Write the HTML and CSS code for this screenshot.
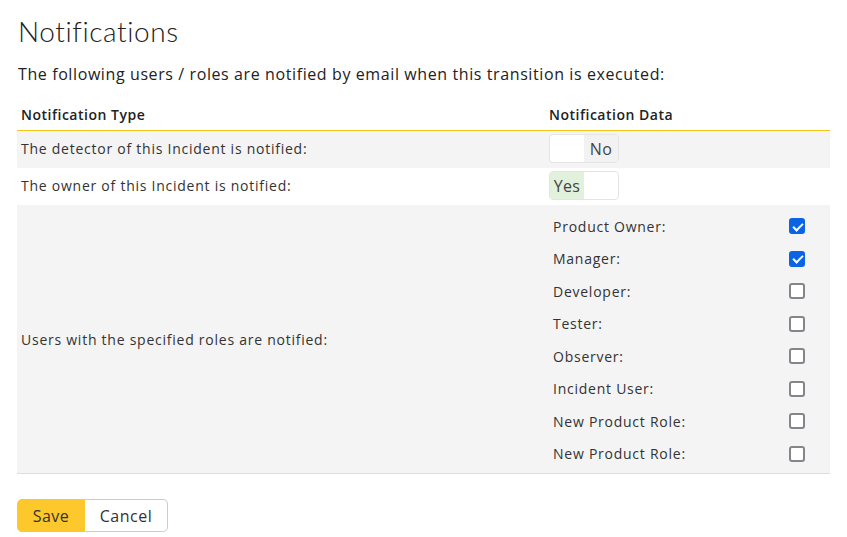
FILE: index.html
```html
<!DOCTYPE html>
<html lang="en">
<head>
    <meta charset="UTF-8">
    <title>Notifications</title>
    <link rel="stylesheet" href="styles.css">
</head>
<body>
    <div class="page">
        <h2 class="title">Notifications</h2>
        <p class="intro">The following users / roles are notified by email when this transition is executed:</p>

        <table class="notify-table">
            <thead>
                <tr>
                    <th class="col-type">Notification Type</th>
                    <th>Notification Data</th>
                </tr>
            </thead>
            <tbody>
                <tr class="shaded">
                    <td>The detector of this Incident is notified:</td>
                    <td>
                        <div class="toggle">
                            <span class="toggle-half"></span>
                            <span class="toggle-half off">No</span>
                        </div>
                    </td>
                </tr>
                <tr>
                    <td>The owner of this Incident is notified:</td>
                    <td>
                        <div class="toggle">
                            <span class="toggle-half on">Yes</span>
                            <span class="toggle-half"></span>
                        </div>
                    </td>
                </tr>
                <tr class="shaded last">
                    <td>Users with the specified roles are notified:</td>
                    <td>
                        <ul class="roles">
                            <li><span>Product Owner:</span><span class="check checked"></span></li>
                            <li><span>Manager:</span><span class="check checked"></span></li>
                            <li><span>Developer:</span><span class="check"></span></li>
                            <li><span>Tester:</span><span class="check"></span></li>
                            <li><span>Observer:</span><span class="check"></span></li>
                            <li><span>Incident User:</span><span class="check"></span></li>
                            <li><span>New Product Role:</span><span class="check"></span></li>
                            <li><span>New Product Role:</span><span class="check"></span></li>
                        </ul>
                    </td>
                </tr>
            </tbody>
        </table>

        <div class="buttons">
            <button class="btn btn-save">Save</button>
            <button class="btn btn-cancel">Cancel</button>
        </div>
    </div>
</body>
</html>
```

FILE: styles.css
```css
body {
    margin: 0;
    font-family: 'Open Sans', sans-serif;
    color: #333;
    background: #fff;
}
.page {
    padding: 13px 17px 0 17px;
    width: 813px;
}
.title {
    font-family: 'Lato', sans-serif;
    font-weight: 300;
    font-size: 28px;
    line-height: 36px;
    margin: 0 0 0 1px;
    color: #222;
    letter-spacing: 0.6px;
}
.intro {
    font-size: 16px;
    line-height: 22px;
    letter-spacing: 0.6px;
    margin: 14px 0 20px 1px;
    color: #222;
}
.notify-table {
    width: 100%;
    border-collapse: collapse;
    font-size: 14px;
    letter-spacing: 0.75px;
}
.notify-table th {
    text-align: left;
    font-weight: 600;
    font-size: 14px;
    line-height: 20px;
    letter-spacing: 0.5px;
    padding: 0 4px 5px 4px;
    border-bottom: 1px solid #f5c518;
    color: #222;
}
.notify-table .col-type {
    width: 520px;
}
.notify-table td {
    padding: 3px 4px 5px 4px;
    color: #333;
}
.notify-table tr.shaded td {
    background: #f4f4f4;
}
.notify-table tr.last td {
    border-bottom: 1px solid #ddd;
    padding-top: 4px;
    padding-bottom: 3px;
}
.toggle {
    display: flex;
    box-sizing: border-box;
    width: 70px;
    height: 29px;
    border: 1px solid #e4e4e4;
    border-radius: 4px;
    background: #fff;
    overflow: hidden;
}
.toggle-half {
    flex: 1;
    display: flex;
    align-items: center;
    justify-content: center;
    font-size: 16px;
    letter-spacing: 0.3px;
    color: #444;
}
.toggle-half.off {
    background: #f2f2f2;
}
.toggle-half.on {
    background: #e2f1dc;
}
.roles {
    list-style: none;
    margin: 0;
    padding: 1px 0 0 0;
}
.roles li {
    display: flex;
    justify-content: space-between;
    align-items: center;
    height: 32.5px;
    padding-left: 4px;
    padding-right: 21px;
}
.check {
    box-sizing: border-box;
    width: 16px;
    height: 16px;
    border: 2px solid #85858b;
    border-radius: 3px;
    background: #fff;
    position: relative;
}
.check.checked {
    background: #0b63e5;
    border-color: #0b63e5;
}
.check.checked::after {
    content: "";
    position: absolute;
    left: 3.5px;
    top: 0.5px;
    width: 4px;
    height: 8px;
    border: solid #fff;
    border-width: 0 2px 2px 0;
    transform: rotate(45deg);
}
.buttons {
    display: flex;
    margin-top: 25px;
}
.btn {
    font-family: 'Open Sans', sans-serif;
    font-size: 16px;
    letter-spacing: 0.5px;
    height: 33px;
    padding: 0;
    border: 1px solid #ccc;
    color: #333;
    cursor: pointer;
}
.btn-save {
    background: #fdc82b;
    border-color: #fdc82b;
    border-radius: 5px 0 0 5px;
    width: 68px;
}
.btn-cancel {
    background: #fff;
    border-left: none;
    border-radius: 0 5px 5px 0;
    width: 83px;
}
```
